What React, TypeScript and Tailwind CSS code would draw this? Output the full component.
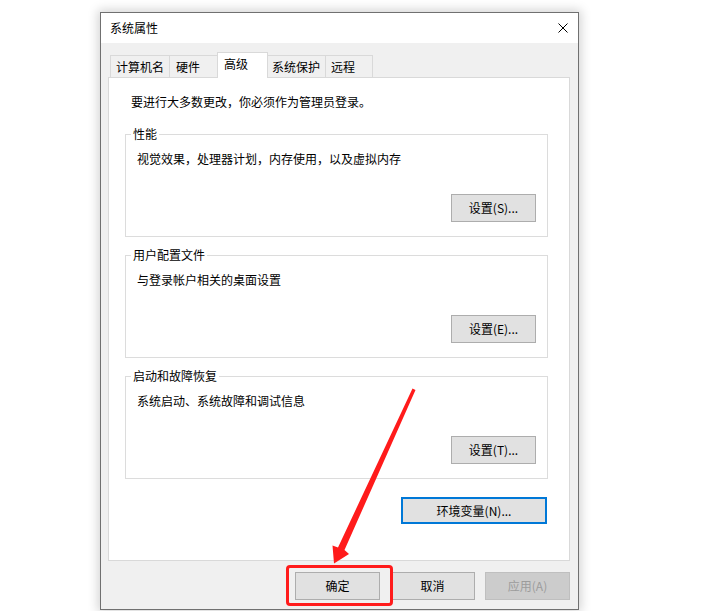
import React from "react";

type BtnProps = {
  children: React.ReactNode;
  disabled?: boolean;
};

function DlgButton({ children, disabled }: BtnProps) {
  return (
    <button
      type="button"
      className={
        disabled
          ? "flex h-[28px] w-[85px] items-center justify-center border border-[#bfbfbf] bg-[#cccccc] text-[12px] leading-[16px] text-[#9c9c9c]"
          : "flex h-[28px] w-[85px] items-center justify-center border border-[#adadad] bg-[#e1e1e1] text-[12px] leading-[16px] text-black"
      }
    >
      {children}
    </button>
  );
}

type GroupProps = {
  title: string;
  text: string;
  button: string;
  className?: string;
};

function Group({ title, text, button, className }: GroupProps) {
  return (
    <fieldset className={"ml-[16px] mr-[21px] border border-[#dcdcdc] " + (className ?? "")}>
      <legend className="ml-[5px] px-[2px] text-[12px] leading-[16px]">{title}</legend>
      <div className="px-[11px] pb-[14px] pt-[9px]">
        <p className="text-[12px] leading-[16px]">{text}</p>
        <div className="mt-[27px] flex justify-end">
          <DlgButton>{button}</DlgButton>
        </div>
      </div>
    </fieldset>
  );
}

export default function App() {
  return (
    <div className="relative h-[611px] w-[702px] overflow-hidden bg-white pl-[100px] pt-[12px] font-['Noto_Sans_CJK_SC','Noto_Sans',sans-serif] text-black">
      {/* dialog window */}
      <div className="flex h-[598px] w-[479px] flex-col border border-[#707070] bg-[#f0f0f0] shadow-[0_0_10px_2px_rgba(0,0,0,0.18)]">
        {/* title bar */}
        <div className="flex h-[30px] items-center justify-between bg-white pl-[9px] pr-[10px]">
          <span className="text-[12px] leading-[16px]">系统属性</span>
          <svg width="10" height="10" viewBox="0 0 10 10" className="block">
            <path d="M0.5 0.5 L9.5 9.5 M9.5 0.5 L0.5 9.5" stroke="#000" strokeWidth="1" fill="none" />
          </svg>
        </div>

        {/* body */}
        <div className="flex flex-1 flex-col pl-[7px] pr-[8px]">
          {/* tabs */}
          <div className="flex h-[34px] items-end pl-[2px] pt-[9px] text-[12px] leading-[16px]">
            <div className="flex h-[22px] w-[60px] items-center border border-b-0 border-[#d9d9d9] pl-[5px]">计算机名</div>
            <div className="-ml-px flex h-[22px] w-[49px] items-center border border-b-0 border-[#d9d9d9] pl-[6px]">硬件</div>
            <div className="relative z-10 -mb-px -ml-px flex h-[26px] w-[51px] items-start border border-b-0 border-[#d9d9d9] bg-white pl-[6px] pt-[3px]">高级</div>
            <div className="-ml-px flex h-[22px] w-[59px] items-center border border-b-0 border-[#d9d9d9] pl-[4px]">系统保护</div>
            <div className="-ml-px flex h-[22px] w-[48px] items-center border border-b-0 border-[#d9d9d9] pl-[5px]">远程</div>
          </div>

          {/* tab panel */}
          <div className="flex h-[484px] flex-col border border-[#d9d9d9] bg-white">
            <p className="pl-[22px] pt-[16px] text-[12px] leading-[16px]">要进行大多数更改，你必须作为管理员登录。</p>
            <Group
              className="mt-[16px]"
              title="性能"
              text="视觉效果，处理器计划，内存使用，以及虚拟内存"
              button="设置(S)..."
            />
            <Group className="mt-[10px]" title="用户配置文件" text="与登录帐户相关的桌面设置" button="设置(E)..." />
            <Group className="mt-[10px]" title="启动和故障恢复" text="系统启动、系统故障和调试信息" button="设置(T)..." />
            <div className="mr-[22px] mt-[18px] flex justify-end">
              <button
                type="button"
                className="flex h-[27px] w-[146px] items-center justify-center border-2 border-[#0078d7] bg-[#e1e1e1] text-[12px] leading-[16px]"
              >
                环境变量(N)...
              </button>
            </div>
          </div>

          {/* dialog buttons */}
          <div className="mt-[11px] flex justify-end gap-[10px] pr-[-1px]">
            <DlgButton>确定</DlgButton>
            <DlgButton>取消</DlgButton>
            <DlgButton disabled>应用(A)</DlgButton>
          </div>
        </div>
      </div>

      {/* red highlight around the OK button */}
      <div className="absolute left-[286px] top-[565px] h-[41px] w-[107px] rounded-[4px] border-[3px] border-[#ff1b1b]" />

      {/* red pointer arrow */}
      <svg className="absolute left-0 top-0" width="702" height="611" viewBox="0 0 702 611">
        <polygon
          points="412.5,388.5 415.5,390 344.5,550 349,554 334,563.5 332.5,545.5 338,547.5"
          fill="#ff1b1b"
        />
      </svg>
    </div>
  );
}
